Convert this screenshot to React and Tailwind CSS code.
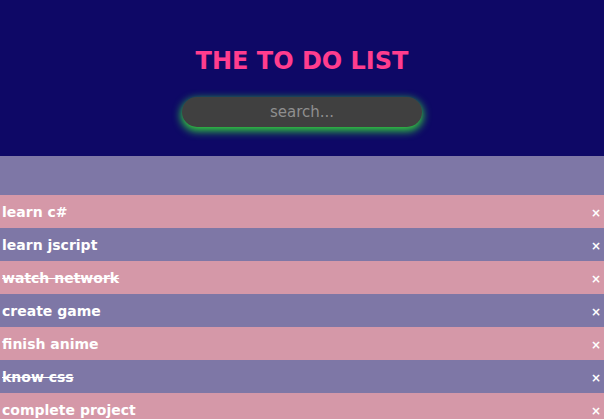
import React, { useState } from 'react';

const initialTodos = [
  { text: 'learn c#', done: false },
  { text: 'learn jscript', done: false },
  { text: 'watch network', done: true },
  { text: 'create game', done: false },
  { text: 'finish anime', done: false },
  { text: 'know css', done: true },
  { text: 'complete project', done: false },
];

const font = { fontFamily: '"Comic Sans MS", "DejaVu Sans", sans-serif' };

export default function App() {
  const [todos, setTodos] = useState(initialTodos);
  const [query, setQuery] = useState('');

  const remove = (i) => setTodos(todos.filter((_, idx) => idx !== i));
  const toggle = (i) =>
    setTodos(todos.map((t, idx) => (idx === i ? { ...t, done: !t.done } : t)));

  const shown = todos.filter((t) => t.text.includes(query));

  return (
    <div className="min-h-screen bg-[#7e77a6]" style={font}>
      {/* header */}
      <header className="h-[156px] bg-[#0e0866] flex flex-col items-center pt-[44px]">
        <h1 className="text-[24px] leading-[34px] font-bold text-[#ff3d8e]">THE TO DO LIST</h1>
        <input
          value={query}
          onChange={(e) => setQuery(e.target.value)}
          placeholder="search..."
          className="mt-[19px] w-[240px] h-[30px] rounded-full bg-[#404040] text-center text-[15px] text-[#cfcfcf] placeholder:text-[#8f8f8f] outline-none shadow-[0_3px_8px_1px_#36d43c]"
        />
      </header>

      {/* spacer strip */}
      <div className="h-[39px]" />

      <ul>
        {shown.map((t, i) => (
          <li
            key={t.text}
            className={`h-[33px] flex items-center justify-between pl-[2px] pr-[3px] pt-[2px] ${i % 2 === 0 ? 'bg-[#d598a8]' : 'bg-[#7e77a6]'}`}
          >
            <span
              onClick={() => toggle(i)}
              className={`text-white font-bold text-[14px] cursor-pointer ${t.done ? 'line-through' : ''}`}
            >
              {t.text}
            </span>
            <button onClick={() => remove(i)} className="text-white font-bold text-[12px] leading-none">
              ×
            </button>
          </li>
        ))}
      </ul>
    </div>
  );
}
